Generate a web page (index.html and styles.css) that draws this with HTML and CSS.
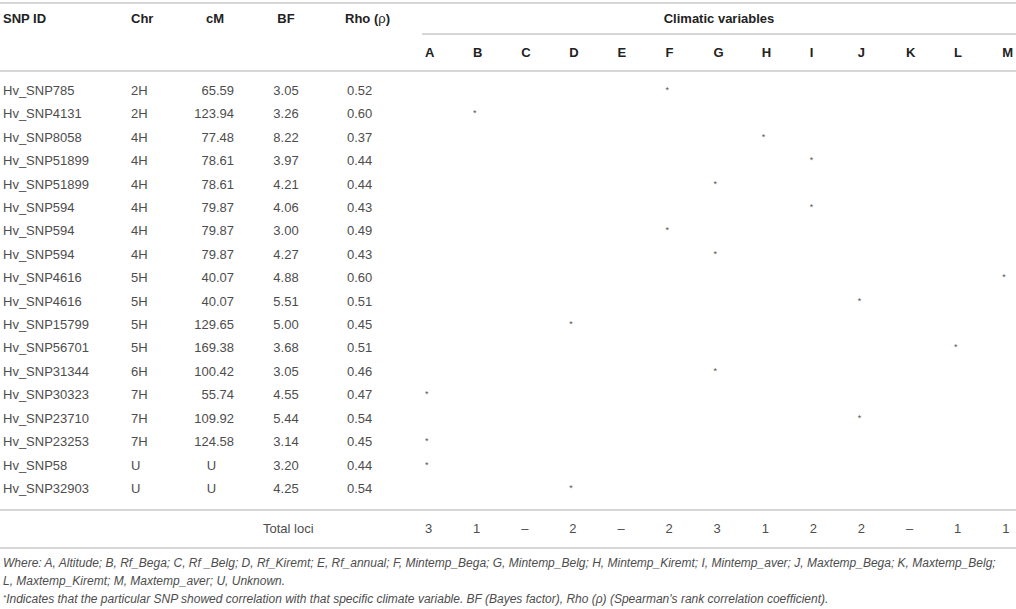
FILE: index.html
```html
<!DOCTYPE html>
<html lang="en">
<head>
<meta charset="utf-8">
<title>SNP climatic associations</title>
<link rel="stylesheet" href="styles.css">
</head>
<body>
<div class="page">
<table class="snp">
  <colgroup>
    <col class="c-id"><col class="c-chr"><col class="c-cm"><col class="c-bf"><col class="c-rho">
    <col class="c-v"><col class="c-v"><col class="c-v"><col class="c-v"><col class="c-v"><col class="c-v"><col class="c-v"><col class="c-v"><col class="c-v"><col class="c-v"><col class="c-v"><col class="c-v"><col class="c-last">
  </colgroup>
  <thead>
    <tr class="h1">
      <th rowspan="2" class="id">SNP ID</th>
      <th rowspan="2" class="chr">Chr</th>
      <th rowspan="2" class="cm">cM</th>
      <th rowspan="2" class="bf">BF</th>
      <th rowspan="2" class="rho">Rho (<span class="rho-sym">ρ</span>)</th>
      <th colspan="13" class="group">Climatic variables</th>
    </tr>
    <tr class="h2">
      <th class="v">A</th><th class="v">B</th><th class="v">C</th><th class="v">D</th><th class="v">E</th><th class="v">F</th><th class="v">G</th><th class="v">H</th><th class="v">I</th><th class="v">J</th><th class="v">K</th><th class="v">L</th><th class="v">M</th>
    </tr>
  </thead>
  <tbody>
    <tr class="first"><td class="id">Hv_SNP785</td><td class="chr">2H</td><td class="cm">65.59</td><td class="bf">3.05</td><td class="rho">0.52</td><td></td><td></td><td></td><td></td><td></td><td><span class="star">*</span></td><td></td><td></td><td></td><td></td><td></td><td></td><td></td></tr>
    <tr><td class="id">Hv_SNP4131</td><td class="chr">2H</td><td class="cm">123.94</td><td class="bf">3.26</td><td class="rho">0.60</td><td></td><td><span class="star">*</span></td><td></td><td></td><td></td><td></td><td></td><td></td><td></td><td></td><td></td><td></td><td></td></tr>
    <tr><td class="id">Hv_SNP8058</td><td class="chr">4H</td><td class="cm">77.48</td><td class="bf">8.22</td><td class="rho">0.37</td><td></td><td></td><td></td><td></td><td></td><td></td><td></td><td><span class="star">*</span></td><td></td><td></td><td></td><td></td><td></td></tr>
    <tr><td class="id">Hv_SNP51899</td><td class="chr">4H</td><td class="cm">78.61</td><td class="bf">3.97</td><td class="rho">0.44</td><td></td><td></td><td></td><td></td><td></td><td></td><td></td><td></td><td><span class="star">*</span></td><td></td><td></td><td></td><td></td></tr>
    <tr><td class="id">Hv_SNP51899</td><td class="chr">4H</td><td class="cm">78.61</td><td class="bf">4.21</td><td class="rho">0.44</td><td></td><td></td><td></td><td></td><td></td><td></td><td><span class="star">*</span></td><td></td><td></td><td></td><td></td><td></td><td></td></tr>
    <tr><td class="id">Hv_SNP594</td><td class="chr">4H</td><td class="cm">79.87</td><td class="bf">4.06</td><td class="rho">0.43</td><td></td><td></td><td></td><td></td><td></td><td></td><td></td><td></td><td><span class="star">*</span></td><td></td><td></td><td></td><td></td></tr>
    <tr><td class="id">Hv_SNP594</td><td class="chr">4H</td><td class="cm">79.87</td><td class="bf">3.00</td><td class="rho">0.49</td><td></td><td></td><td></td><td></td><td></td><td><span class="star">*</span></td><td></td><td></td><td></td><td></td><td></td><td></td><td></td></tr>
    <tr><td class="id">Hv_SNP594</td><td class="chr">4H</td><td class="cm">79.87</td><td class="bf">4.27</td><td class="rho">0.43</td><td></td><td></td><td></td><td></td><td></td><td></td><td><span class="star">*</span></td><td></td><td></td><td></td><td></td><td></td><td></td></tr>
    <tr><td class="id">Hv_SNP4616</td><td class="chr">5H</td><td class="cm">40.07</td><td class="bf">4.88</td><td class="rho">0.60</td><td></td><td></td><td></td><td></td><td></td><td></td><td></td><td></td><td></td><td></td><td></td><td></td><td><span class="star">*</span></td></tr>
    <tr><td class="id">Hv_SNP4616</td><td class="chr">5H</td><td class="cm">40.07</td><td class="bf">5.51</td><td class="rho">0.51</td><td></td><td></td><td></td><td></td><td></td><td></td><td></td><td></td><td></td><td><span class="star">*</span></td><td></td><td></td><td></td></tr>
    <tr><td class="id">Hv_SNP15799</td><td class="chr">5H</td><td class="cm">129.65</td><td class="bf">5.00</td><td class="rho">0.45</td><td></td><td></td><td></td><td><span class="star">*</span></td><td></td><td></td><td></td><td></td><td></td><td></td><td></td><td></td><td></td></tr>
    <tr><td class="id">Hv_SNP56701</td><td class="chr">5H</td><td class="cm">169.38</td><td class="bf">3.68</td><td class="rho">0.51</td><td></td><td></td><td></td><td></td><td></td><td></td><td></td><td></td><td></td><td></td><td></td><td><span class="star">*</span></td><td></td></tr>
    <tr><td class="id">Hv_SNP31344</td><td class="chr">6H</td><td class="cm">100.42</td><td class="bf">3.05</td><td class="rho">0.46</td><td></td><td></td><td></td><td></td><td></td><td></td><td><span class="star">*</span></td><td></td><td></td><td></td><td></td><td></td><td></td></tr>
    <tr><td class="id">Hv_SNP30323</td><td class="chr">7H</td><td class="cm">55.74</td><td class="bf">4.55</td><td class="rho">0.47</td><td><span class="star">*</span></td><td></td><td></td><td></td><td></td><td></td><td></td><td></td><td></td><td></td><td></td><td></td><td></td></tr>
    <tr><td class="id">Hv_SNP23710</td><td class="chr">7H</td><td class="cm">109.92</td><td class="bf">5.44</td><td class="rho">0.54</td><td></td><td></td><td></td><td></td><td></td><td></td><td></td><td></td><td></td><td><span class="star">*</span></td><td></td><td></td><td></td></tr>
    <tr><td class="id">Hv_SNP23253</td><td class="chr">7H</td><td class="cm">124.58</td><td class="bf">3.14</td><td class="rho">0.45</td><td><span class="star">*</span></td><td></td><td></td><td></td><td></td><td></td><td></td><td></td><td></td><td></td><td></td><td></td><td></td></tr>
    <tr><td class="id">Hv_SNP58</td><td class="chr">U</td><td class="cm u">U</td><td class="bf">3.20</td><td class="rho">0.44</td><td><span class="star">*</span></td><td></td><td></td><td></td><td></td><td></td><td></td><td></td><td></td><td></td><td></td><td></td><td></td></tr>
    <tr class="last"><td class="id">Hv_SNP32903</td><td class="chr">U</td><td class="cm u">U</td><td class="bf">4.25</td><td class="rho">0.54</td><td></td><td></td><td></td><td><span class="star">*</span></td><td></td><td></td><td></td><td></td><td></td><td></td><td></td><td></td><td></td></tr>
  </tbody>
  <tfoot>
    <tr class="total">
      <td></td><td></td><td></td><td colspan="2" class="total-label">Total loci</td>
      <td>3</td><td>1</td><td>–</td><td>2</td><td>–</td><td>2</td><td>3</td><td>1</td><td>2</td><td>2</td><td>–</td><td>1</td><td>1</td>
    </tr>
  </tfoot>
</table>
<div class="notes">
  <p>Where: A, Altitude; B, Rf_Bega; C, Rf _Belg; D, Rf_Kiremt; E, Rf_annual; F, Mintemp_Bega; G, Mintemp_Belg; H, Mintemp_Kiremt; I, Mintemp_aver; J, Maxtemp_Bega; K, Maxtemp_Belg;<br>L, Maxtemp_Kiremt; M, Maxtemp_aver; U, Unknown.</p>
  <p><sup>*</sup>Indicates that the particular SNP showed correlation with that specific climate variable. BF (Bayes factor), Rho (ρ) (Spearman's rank correlation coefficient).</p>
</div>
</div>
</body>
</html>
```
FILE: styles.css
```css
html, body {
  margin: 0;
  padding: 0;
  background: #ffffff;
}

.page {
  width: 1016px;
  padding-top: 2px;
  font-family: "Liberation Sans", Arial, Helvetica, sans-serif;
  color: #4d4d4d;
}

.snp {
  width: 1016px;
  table-layout: fixed;
  border-collapse: separate;
  border-spacing: 0;
  border-top: 2px solid #d6d6d6;
  font-size: 13px;
}

.c-id { width: 128px; }
.c-chr { width: 52px; }
.c-cm { width: 70px; }
.c-bf { width: 72px; }
.c-rho { width: 100px; }
.c-v { width: 48.1px; }
.c-last { width: 16.8px; }

/* ---------- header ---------- */
.snp th {
  font-weight: bold;
  color: #222222;
  text-align: left;
  padding: 0 0 0 3px;
  line-height: 14px;
  white-space: nowrap;
}

.h1 th {
  vertical-align: top;
  padding-top: 8px;
  border-bottom: 2px solid #d6d6d6;
}

.h1 th.group {
  height: 29px;
  padding: 0;
  vertical-align: middle;
  text-align: center;
  border-bottom: 2px solid #d6d6d6;
}

.h2 th.v {
  height: 35px;
  padding-top: 0;
  padding-bottom: 0;
  vertical-align: middle;
  border-bottom: 2px solid #d6d6d6;
}

.snp th.cm {
  text-align: center;
  padding-left: 0;
}

.snp th.bf {
  text-align: center;
  padding-left: 0;
}

.snp th.rho {
  padding-left: 23px;
}

.rho-sym {
  font-weight: normal;
}

/* ---------- body ---------- */
.snp td {
  padding: 0 0 0 3px;
  line-height: 23.4px;
  white-space: nowrap;
  text-align: left;
  vertical-align: middle;
}

.snp td.cm {
  text-align: right;
  padding-right: 16px;
}

.snp td.cm.u {
  text-align: center;
  padding-right: 10px;
}

.snp td.bf {
  text-align: center;
  padding-left: 0;
}

.snp td.rho {
  padding-left: 25px;
}

.star {
  font-size: 9px;
  vertical-align: 2px;
  color: #555555;
}

.first td {
  padding-top: 7px;
}

.last td {
  padding-bottom: 9px;
}

/* ---------- totals ---------- */
.total td {
  height: 36px;
  line-height: 14px;
  padding-top: 0;
  padding-bottom: 0;
  border-top: 2px solid #d6d6d6;
  border-bottom: 2px solid #d6d6d6;
}

.snp td.total-label {
  padding-left: 13px;
}

/* ---------- notes ---------- */
.notes {
  padding: 5px 0 0 3px;
  font-size: 12px;
  font-style: italic;
  color: #4d4d4d;
  line-height: 18px;
}

.notes p {
  margin: 0;
  white-space: nowrap;
}

.notes sup {
  font-size: 8px;
  vertical-align: 3px;
  line-height: 0;
}
```
